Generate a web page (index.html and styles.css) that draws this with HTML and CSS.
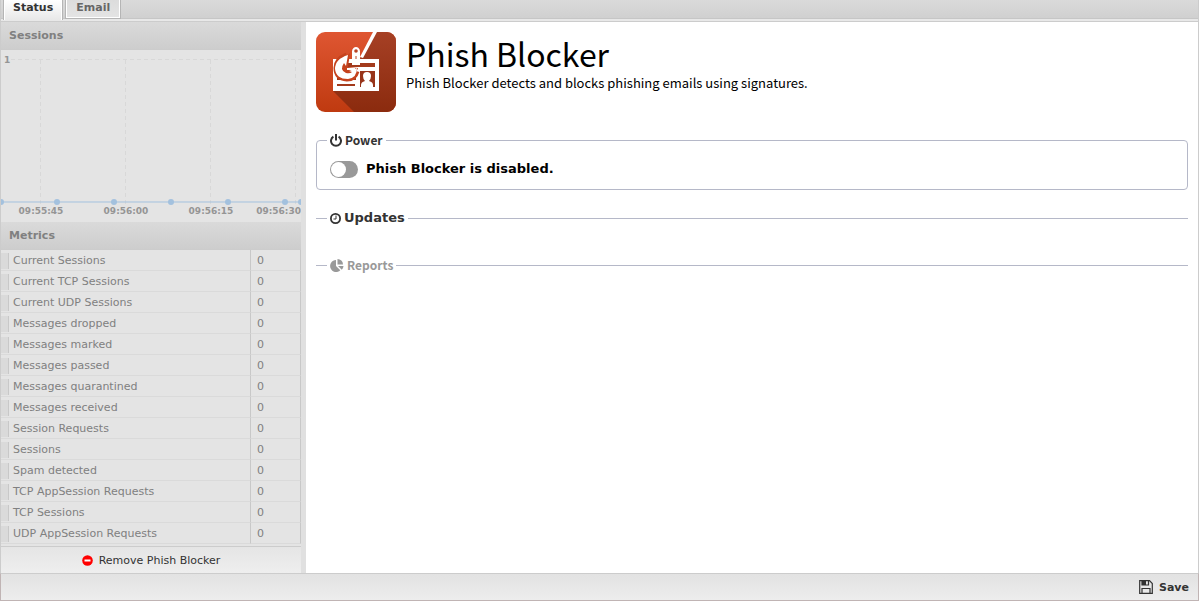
FILE: index.html
```
<!DOCTYPE html>
<html lang="en">
<head>
    <meta charset="utf-8">
    <title>Phish Blocker</title>
    <link rel="stylesheet" href="styles.css">
</head>
<body>
    <nav class="tabs">
        <button type="button" class="tab active">Status</button>
        <button type="button" class="tab">Email</button>
    </nav>

    <div class="content">
        <aside class="sidebar">
            <h2 class="panel-title">Sessions</h2>
            <svg class="chart" width="300" height="172" viewBox="0 0 300 172">
                <g class="grid">
                    <path d="M10 9.500H300M39.500 10V155M124.500 10V155M209.500 10V155M294.500 10V155"/>
                </g>
                <path class="line" d="M0 152H300"/>
                <g class="dots">
                    <circle cx="0" cy="152" r="3"/>
                    <circle cx="56" cy="152" r="3"/>
                    <circle cx="113" cy="152" r="3"/>
                    <circle cx="170" cy="152" r="3"/>
                    <circle cx="227" cy="152" r="3"/>
                    <circle cx="284" cy="152" r="3"/>
                    <circle cx="300" cy="152" r="3"/>
                </g>
                <text x="3" y="13">1</text>
                <text x="40" y="164" text-anchor="middle">09:55:45</text>
                <text x="125" y="164" text-anchor="middle">09:56:00</text>
                <text x="210" y="164" text-anchor="middle">09:56:15</text>
                <text x="300" y="164" text-anchor="end">09:56:30</text>
            </svg>
            <h2 class="panel-title">Metrics</h2>
            <table class="metrics">
                <tr><th scope="row">Current Sessions</th><td>0</td></tr>
                <tr><th scope="row">Current TCP Sessions</th><td>0</td></tr>
                <tr><th scope="row">Current UDP Sessions</th><td>0</td></tr>
                <tr><th scope="row">Messages dropped</th><td>0</td></tr>
                <tr><th scope="row">Messages marked</th><td>0</td></tr>
                <tr><th scope="row">Messages passed</th><td>0</td></tr>
                <tr><th scope="row">Messages quarantined</th><td>0</td></tr>
                <tr><th scope="row">Messages received</th><td>0</td></tr>
                <tr><th scope="row">Session Requests</th><td>0</td></tr>
                <tr><th scope="row">Sessions</th><td>0</td></tr>
                <tr><th scope="row">Spam detected</th><td>0</td></tr>
                <tr><th scope="row">TCP AppSession Requests</th><td>0</td></tr>
                <tr><th scope="row">TCP Sessions</th><td>0</td></tr>
                <tr><th scope="row">UDP AppSession Requests</th><td>0</td></tr>
            </table>
            <button type="button" class="remove">
                <svg width="11" height="11" viewBox="0 0 11 11"><circle cx="5.500" cy="5.500" r="5.300" fill="#f00"/><path fill="#fff" d="M2.500 4.500h6v2h-6z"/></svg>
                Remove Phish Blocker
            </button>
        </aside>

        <main class="main">
            <header class="app-header">
                <svg class="logo" width="80" height="80" viewBox="0 0 80 80">
                    <defs>
                        <linearGradient id="logoBg" x1="0" y1="0" x2="0" y2="1">
                            <stop offset="0" stop-color="#df5632"/>
                            <stop offset="1" stop-color="#bf3a10"/>
                        </linearGradient>
                        <linearGradient id="logoShade" x1="0" y1="0" x2="0" y2="1">
                            <stop offset="0" stop-color="#a64025"/>
                            <stop offset="1" stop-color="#8b2b0e"/>
                        </linearGradient>
                        <clipPath id="logoClip"><rect width="80" height="80" rx="9"/></clipPath>
                    </defs>
                    <g clip-path="url(#logoClip)">
                        <path fill="url(#logoBg)" d="M0 0h80v80H0z"/>
                        <path fill="url(#logoShade)" d="M60 0h20v80H38L17 59l27-32z"/>
                        <path fill="#fff" d="M57 0h4L47 26l-3-1z"/>
                        <!-- badge -->
                        <path fill="#fff" d="M17 27h46v32H17z"/>
                        <path fill="#a33a1c" d="M25 31h34v4H25zM21 46h19v2H21zM21 52h18v2H21z"/>
                        <path fill="#98341a" d="M44 39h15v16H44z"/>
                        <path fill="#fff" d="M45 56v-3q0-3 4-4-2-2-2-5 0-4 4-4t4 4q0 3-2 5 4 1 4 4v3z"/>
                        <!-- hook -->
                        <path fill="none" stroke="#c5421d" stroke-width="7" d="M31 24q-10 4-10 12 0 9 10 10 7 0 9-7"/>
                        <path fill="#c5421d" d="M34 21l-2 14 10 1-3 7H26V29z"/>
                        <path fill="#fff" d="M32 23l-2 11-2-3q-5 7 2 10 4 1 6-1l-3-1 8-3q0 10-9 11-12 0-13-10 0-10 13-14z"/>
                        <path fill="#fff" d="M31 36h8v2h-8z"/>
                        <!-- clip -->
                        <path fill="#fff" d="M36 33V19q1-4 4-4t4 4v14z"/>
                        <circle cx="40" cy="19" r="1.800" fill="#b94425"/>
                        <path stroke="#b94425" d="M40 24v3"/>
                    </g>
                </svg>
                <div>
                    <h1>Phish Blocker</h1>
                    <p>Phish Blocker detects and blocks phishing emails using signatures.</p>
                </div>
            </header>

            <fieldset class="power">
                <legend>
                    <svg width="12" height="13" viewBox="0 0 12 13"><g fill="none" stroke="#333" stroke-width="2"><path d="M3.400 2.600a5 5 0 1 0 5.200 0"/><path d="M6 0v6.500"/></g></svg>
                    Power
                </legend>
                <label class="toggle"><input type="checkbox">Phish Blocker is disabled.</label>
            </fieldset>

            <fieldset class="section updates">
                <legend>
                    <svg width="11" height="13" viewBox="0 0 11 13"><g fill="none" stroke="#333"><circle cx="5.500" cy="6.500" r="4.600" stroke-width="1.800"/><path d="M6 3.500v3.500H3.500"/></g></svg>
                    Updates
                </legend>
            </fieldset>

            <fieldset class="section reports">
                <legend>
                    <svg width="14" height="13" viewBox="0 0 14 13"><path fill="#999" d="M6 1v6l4.300 4.300A6 6 0 1 1 6 1zM7.500 0A5.500 5.500 0 0 1 13 5.500H7.500zM8 7h5.500a6 6 0 0 1-1.700 3.800z"/></svg>
                    Reports
                </legend>
            </fieldset>
        </main>
    </div>

    <footer class="footer">
        <button type="button" class="save">
            <svg width="14" height="14" viewBox="0 0 14 14"><path fill="none" stroke="#333" stroke-width="1.200" d="M.7.7h9.800l2.800 2.800v9.800H.7zM3 13V8.500h8V13M3 1v4h6.500V1"/><path fill="#333" d="M3 1h4v4H3z"/></svg>
            Save
        </button>
    </footer>
</body>
</html>
```
FILE: styles.css
```
* {
    box-sizing: border-box;
}
body {
    margin: 0;
    min-height: 100vh;
    display: flex;
    flex-direction: column;
    font-family: "DejaVu Sans", sans-serif;
    font-size: 11px;
    color: #333;
    background: #fff;
}
button {
    font-family: inherit;
    border: none;
    background: none;
    padding: 0;
    color: #333;
    cursor: pointer;
}
.tabs {
    display: flex;
    gap: 4px;
    height: 22px;
    padding-left: 3px;
    background: linear-gradient(#dadada, #d0d0d0 18px, #c6c6c6 18px, #c6c6c6 19px, #e8e8e8 19px);
    border-bottom: 1px solid #ccc;
    border-left: 1px solid #ccc;
    border-right: 1px solid #ccc;
}
.tab {
    height: 18px;
    padding: 0 9px 2px;
    font-size: 11px;
    line-height: 16px;
    font-weight: bold;
    color: #666;
    background: linear-gradient(#dcdcdc, #e4e4e4);
    border: 1px solid #fff;
    border-top: none;
    outline: 1px solid #b5b5b5;
}
.tab.active {
    height: 20px;
    padding: 0 8px 4px;
    color: #333;
    background: linear-gradient(#fff, #e8e8e8);
    border-bottom: none;
    outline: none;
    box-shadow: 1px 0 #b5b5b5, -1px 0 #b5b5b5;
}
.content {
    flex: 1;
    display: flex;
    border-left: 1px solid #ccc;
    border-right: 1px solid #ccc;
}
.sidebar {
    width: 305px;
    flex-shrink: 0;
    display: flex;
    flex-direction: column;
    border-right: 5px solid #e0e0e0;
    background: #e4e4e4;
}
.panel-title {
    margin: 0;
    padding: 0 8px;
    height: 28px;
    line-height: 28px;
    font-size: 11px;
    color: #808080;
    background: linear-gradient(#dadada, #cdcdcd);
    border-bottom: 1px solid #ccc;
}
.chart {
    display: block;
}
.chart .grid {
    fill: none;
    stroke: #d8d8d8;
    stroke-dasharray: 4 3;
}
.chart .line {
    stroke: #a3c1de;
    stroke-width: 1;
}
.chart .dots {
    fill: #a3c1de;
}
.chart text {
    font-size: 9px;
    font-weight: bold;
    fill: #959595;
}
.metrics {
    width: 100%;
    border-collapse: separate;
    border-spacing: 0;
    margin-bottom: 2px;
    color: #808080;
}
.metrics tr {
    height: 21px;
}
.metrics th,
.metrics td {
    border-bottom: 1px solid #dadada;
}
.metrics th {
    padding: 0 0 0 12px;
    text-align: left;
    font-weight: normal;
    background: linear-gradient(90deg, #dadada 7px, #c8c8c8 7px, #c8c8c8 8px, transparent 8px) no-repeat 0 3px / 8px 16px;
}
.metrics td {
    width: 51px;
    padding: 0 6px;
    border-left: 1px solid #c8c8c8;
    border-right: 1px solid #c8c8c8;
}
.remove {
    flex: 1;
    display: flex;
    justify-content: center;
    align-items: center;
    gap: 6px;
    font-size: 11px;
    background: linear-gradient(#e5e5e5, #eee);
    border-top: 1px solid #ccc;
}
.main {
    flex: 1;
    padding: 10px;
}
.app-header {
    display: flex;
    gap: 10px;
    height: 80px;
    margin-bottom: 19px;
    color: #000;
    font-family: "Noto Sans CJK SC", sans-serif;
}
.app-header h1 {
    margin: 0;
    font-size: 32px;
    line-height: 42px;
    font-weight: normal;
}
.app-header p {
    margin: 0;
    font-size: 13px;
    line-height: 18px;
}
fieldset {
    margin: 0;
    padding: 0 10px;
    border: 1px solid #b5b8c8;
    border-radius: 4px;
}
legend {
    display: flex;
    align-items: center;
    gap: 3px;
    height: 18px;
    padding: 0 3px;
    font-size: 13px;
    font-weight: bold;
    line-height: 18px;
}
.power {
    height: 59px;
    margin-bottom: 19px;
}
.power legend,
.reports legend {
    font-family: "Noto Sans CJK SC", sans-serif;
    font-size: 12px;
}
.toggle {
    display: flex;
    align-items: center;
    gap: 8px;
    margin: 11px 3px;
    font-size: 13px;
    font-weight: bold;
    line-height: 18px;
    color: #000;
}
.toggle input {
    appearance: none;
    width: 28px;
    height: 17px;
    margin: 0;
    padding: 1px;
    border-radius: 9px;
    background: #999;
}
.toggle input::before {
    content: "";
    display: block;
    width: 15px;
    height: 15px;
    border-radius: 50%;
    background: #fff;
}
.toggle input:checked::before {
    margin-left: 11px;
}
.section {
    height: 28px;
    margin-bottom: 19px;
    border-width: 1px 0 0;
    border-radius: 0;
    padding: 0 11px;
}
.reports legend {
    color: #999;
}
.footer {
    display: flex;
    justify-content: flex-end;
    height: 28px;
    padding: 0 9px;
    background: linear-gradient(#e2e2e2, #ededed);
    border: 1px solid #c0b4b4;
    border-top-color: #ccc;
}
.save {
    display: flex;
    align-items: center;
    gap: 6px;
    font-size: 11px;
    font-weight: bold;
}
```
